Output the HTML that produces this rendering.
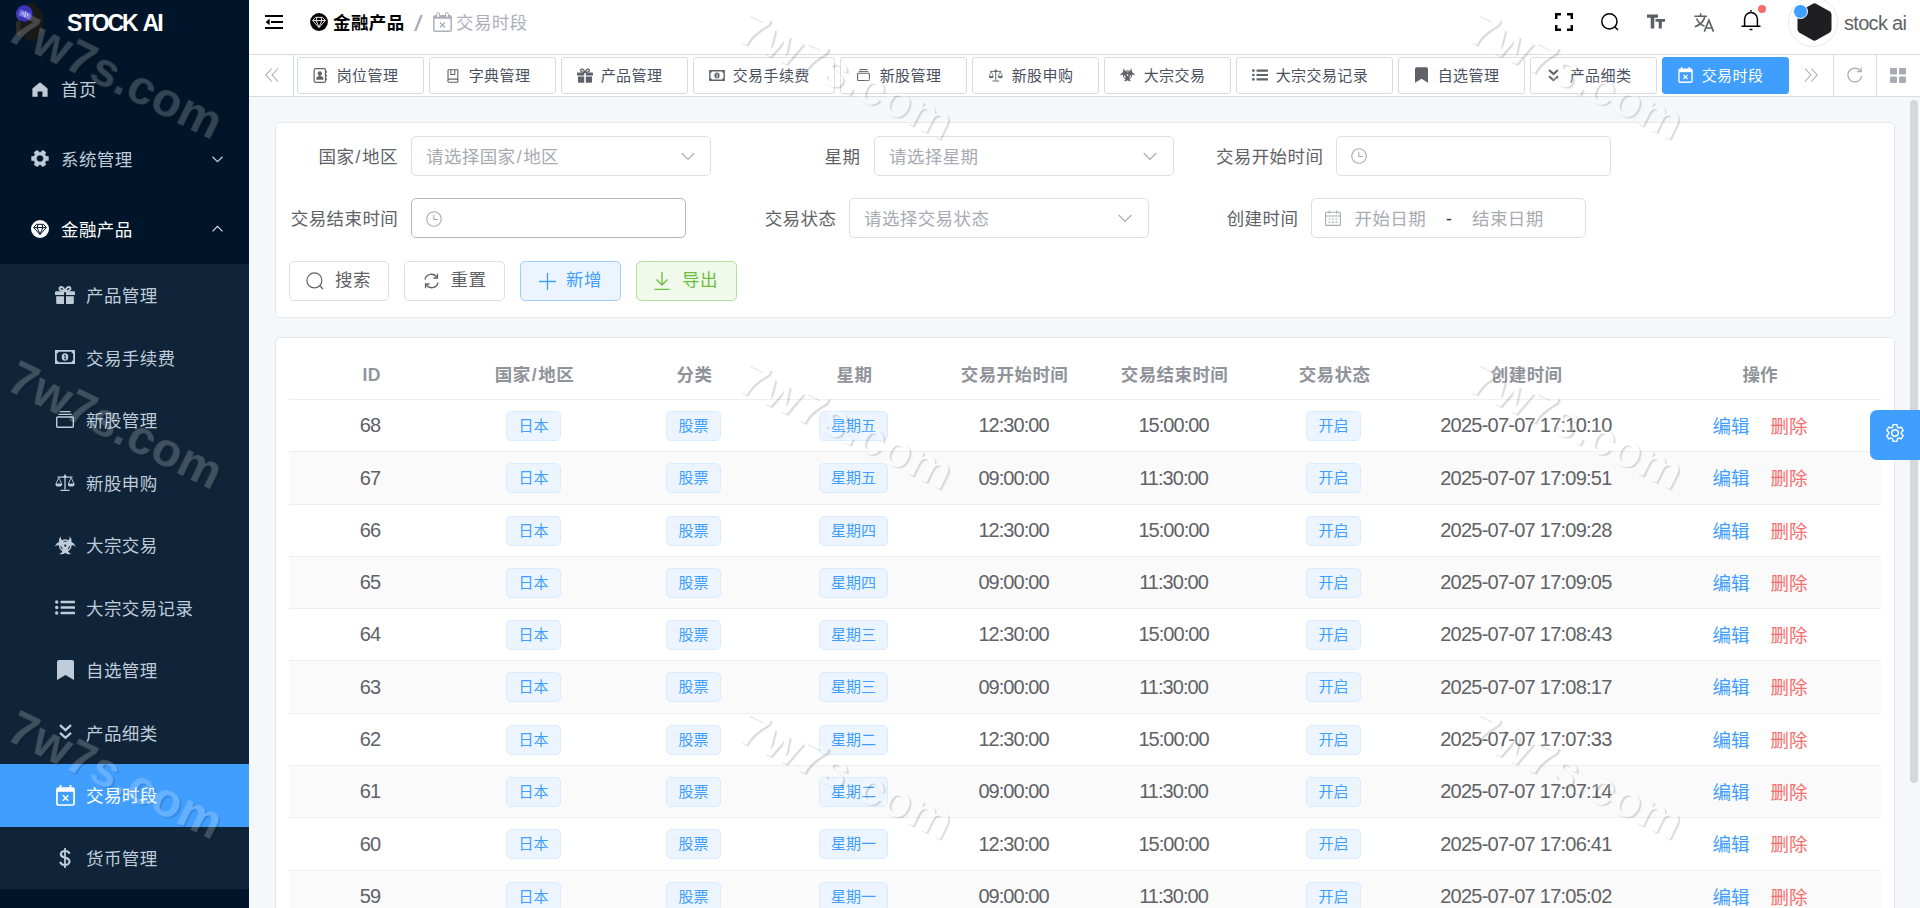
<!DOCTYPE html>
<html lang="zh-CN">
<head>
<meta charset="utf-8">
<title>STOCK AI - 交易时段</title>
<style>
*{box-sizing:border-box;margin:0;padding:0}
html,body{width:1920px;height:908px;overflow:hidden;background:#f5f7fa;
  font-family:"Liberation Sans","Noto Sans CJK SC",sans-serif;font-size:17.5px;color:#606266;letter-spacing:.4px}
svg{display:block}
.abs{position:absolute}
/* ---------- sidebar ---------- */
#side{position:absolute;left:0;top:0;width:249px;height:908px;background:#001529;overflow:hidden}
#logo-t{position:absolute;left:67px;top:10px;height:26px;line-height:26px;font-size:23px;font-weight:700;color:#fff;letter-spacing:-2.1px;word-spacing:2.6px;white-space:nowrap}
.mi{position:absolute;left:0;width:249px;color:#fff;white-space:nowrap}
.mi .tx{position:absolute;top:1px;font-size:17.5px}
.m1{height:70px;line-height:70px}
.m1 .tx{left:61px}
.m2{height:62.5px;line-height:62.5px}
.m2 .tx{left:86px}
#sub{position:absolute;left:0;top:264px;width:249px;height:625px;background:#0f2438}
.mi svg{position:absolute}
.act{background:#409eff}
/* ---------- header ---------- */
#nav{position:absolute;left:249px;top:0;width:1671px;height:54px;background:#fff}
#tags{position:absolute;left:249px;top:54px;width:1671px;height:43px;background:#fff;border-top:1px solid #d8dce5;border-bottom:1px solid #d8dce5}
.tag{position:absolute;top:2px;height:36.5px;border:1px solid #d9dbe0;border-radius:3px;background:#fff;color:#495060;font-size:15px;line-height:34px;white-space:nowrap}
.tag .tx{position:absolute;left:38.5px;top:1px}
.tag svg{position:absolute}
.tag.on{background:#409eff;border-color:#409eff;color:#fff}
.vsep{position:absolute;top:0;width:1px;height:41px;background:#d8dce5}
/* ---------- cards ---------- */
.card{position:absolute;background:#fff;border:1px solid #e4e7ed;border-radius:5px}
.lab{position:absolute;height:40px;line-height:42px;font-size:17.5px;color:#606266;text-align:right;white-space:nowrap}
.inp{position:absolute;height:40px;border:1px solid #dcdfe6;border-radius:5px;background:#fff;line-height:40px;font-size:17.5px;color:#a8abb2;white-space:nowrap}
.inp .ph{position:absolute;left:14px;top:0}
.btn{position:absolute;top:261px;height:40px;border:1px solid #dcdfe6;border-radius:5px;background:#fff;line-height:37px;font-size:17.5px;color:#606266;white-space:nowrap}
.btn .tx{position:absolute;top:0}
.btn svg{position:absolute}
/* ---------- table ---------- */
#tb{position:absolute;left:289px;top:350px;width:1592px}
.tr{position:absolute;left:0;width:1592px;height:52.31px;border-bottom:1px solid #ebeef5;line-height:51.3px;font-size:18.5px}
.tr.st{background:#fafafa}
.th{position:absolute;left:0;top:0;width:1592px;height:50px;border-bottom:1px solid #ebeef5;line-height:50px;font-weight:700;color:#909399}
.c{position:absolute;top:0;text-align:center;white-space:nowrap}
.c1{left:0;width:165.5px}.c2{left:165.5px;width:160px}.c3{left:325.5px;width:160px}.c4{left:485.5px;width:160px}
.c5{left:645.5px;width:160px}.c6{left:805.5px;width:160px}.c7{left:965.5px;width:160px}.c8{left:1125.5px;width:224.3px}.c9{left:1349.8px;width:241.2px;padding-left:1px;letter-spacing:0}
.c1.num{padding-right:3.5px}
.tg{margin-right:2px;letter-spacing:0;display:inline-block;height:30px;line-height:28px;padding:0 11px;font-size:15px;color:#409eff;background:#ecf5ff;border:1px solid #d9ecff;border-radius:5px;vertical-align:middle;position:relative;top:-1px}
.ed{color:#409eff;position:relative;top:1px}.de{color:#f56c6c;margin-left:21px;position:relative;top:1px}
.sl{padding:0 1.2px}
.num{font-size:20px;letter-spacing:-.75px}
.c5.num,.c6.num{letter-spacing:-.97px;padding-right:2px}
.c8.num{padding-right:1.5px}
/* ---------- watermark ---------- */
.wm{position:absolute;font-size:51px;font-style:italic;white-space:nowrap;transform-origin:0 0;transform:rotate(28deg);pointer-events:none;letter-spacing:1px}
.wmd{color:rgba(255,255,255,.2);font-weight:700}
.wml{color:rgba(255,255,255,.35);text-shadow:1.5px 1.5px 1px rgba(0,0,0,.28);font-weight:400}
</style>
</head>
<body>
<div id="side">
  <!-- logo -->
  <svg class="abs" style="left:14px;top:1px" width="34" height="44" viewBox="0 0 34 44">
    <path d="M8 6 L14.700 2.900 L18.300 1.300 Q19.300 1 20 1.800 L28.400 11.800 Q29 12.600 29 13.600 L29 29 Q29 30 28.400 30.800 L20.400 40.600 Q19.600 41.600 18.400 41 L3 33.600 Q2 33.100 2 32 L2 21 Z" fill="#191919"/>
    <path d="M2 21 L2 32 Q2 33.100 3 33.600 L6.500 35.300 L6.500 19Z" fill="#2b2b2b"/>
    <circle cx="10.300" cy="12.500" r="8.300" fill="#3a33c0"/>
    <path d="M2.300 10.500 A8.300 8.300 0 0 0 6 19.600 L6 7.500Z" fill="#4a44b8" opacity=".6"/>
    <path d="M6.500 8 L17.500 12.300 L15.500 18.600 L4.800 14.300Z" fill="#5b57d6"/>
    <path d="M9.500 10.800 L8.300 12.600 L9.800 14.200 M13 12 L14.300 13.800 L12.800 15.400 M11.800 10.300 L10.600 16.200" stroke="#e4e4ff" stroke-width=".8" fill="none"/>
  </svg>
  <div id="logo-t">STOCK AI</div>

  <div class="mi m1" style="top:54px;color:#bfcbd9">
    <svg style="left:32px;top:28px" width="16" height="15" viewBox="0 0 16 15"><path d="M8 .3 L15.6 6.6 V14.8 H10.4 V9.6 H5.6 V14.8 H.4 V6.6Z" fill="#bfcbd9"/></svg>
    <span class="tx">首页</span>
  </div>
  <div class="mi m1" style="top:124px;color:#bfcbd9">
    <svg style="left:30.900px;top:26.200px" width="18" height="17" viewBox="-9.500 -9 19 18"><path fill="#bfcbd9" fill-rule="evenodd" stroke="#bfcbd9" stroke-width=".6" stroke-linejoin="round" d="M6.25 2.40L8.87 2.05L8.87 -2.05L6.25 -2.40L5.21 -4.22L6.21 -6.66L2.66 -8.70L1.05 -6.62L-1.05 -6.62L-2.66 -8.70L-6.21 -6.66L-5.21 -4.22L-6.25 -2.40L-8.87 -2.05L-8.87 2.05L-6.25 2.40L-5.21 4.22L-6.21 6.66L-2.66 8.70L-1.05 6.62L1.05 6.62L2.66 8.70L6.21 6.66L5.21 4.22ZM3.700 0A3.700 3.700 0 1 0 -3.700 0A3.700 3.700 0 1 0 3.700 0Z"/></svg>
    <span class="tx">系统管理</span>
    <svg style="left:212px;top:32px" width="11" height="7" viewBox="0 0 11 7"><path d="M.5 .7 L5.5 5.7 L10.500 .7" stroke="#bfcbd9" stroke-width="1.300" fill="none"/></svg>
  </div>
  <div class="mi m1" style="top:194px">
    <svg style="left:31px;top:26px" width="18" height="18" viewBox="0 0 18 18"><circle cx="9" cy="9" r="9" fill="#fff"/><path d="M5.500 4.300h7l2.900 3.300L9 14.600 2.600 7.600zM3 7.600h12M7 4.400L6.100 7.600 9 14.200 11.900 7.600 11 4.400" stroke="#001529" stroke-width="1" fill="none" stroke-linejoin="round"/></svg>
    <span class="tx">金融产品</span>
    <svg style="left:212px;top:31px" width="11" height="7" viewBox="0 0 11 7"><path d="M.5 6.300 L5.500 1.300 L10.500 6.300" stroke="#e3e6ea" stroke-width="1.050" fill="none"/></svg>
  </div>
  <div id="sub"></div>
  <div class="mi m2" style="top:264px;color:#bfcbd9">
    <svg style="left:55px;top:22px" width="20" height="18" viewBox="0 0 20 18"><path fill="#bfcbd9" d="M1 5.200h8V9H0V6.200a1 1 0 011-1zM11 5.200h8a1 1 0 011 1V9h-9zM1.200 10.200H9V18H2.200a1 1 0 01-1-1zM11 10.200h7.800V17a1 1 0 01-1 1H11z"/><path d="M9.600 5 C7 5 4.500 4.300 4.500 2.500 C4.500 .8 7 .3 8.300 2 L10 5 L11.700 2 C13 .3 15.500 .8 15.500 2.500 C15.500 4.300 13 5 10.400 5" stroke="#bfcbd9" stroke-width="1.900" fill="none"/></svg>
    <span class="tx">产品管理</span>
  </div>
  <div class="mi m2" style="top:326.500px;color:#bfcbd9">
    <svg style="left:55px;top:23.500px" width="20" height="14" viewBox="0 0 20 14"><path fill="#bfcbd9" fill-rule="evenodd" d="M0 0h20v14H0zM3.500 1.800A1.800 1.800 0 011.800 3.500v7A1.800 1.800 0 013.500 12.200h13A1.800 1.800 0 0118.200 10.500v-7A1.800 1.800 0 0116.500 1.800z"/><ellipse cx="10" cy="7" rx="3.300" ry="3.800" fill="#bfcbd9"/><path d="M9.200 5.600l1-.6v3.600M9 8.800h2.200" stroke="#0f2438" stroke-width=".9" fill="none"/></svg>
    <span class="tx">交易手续费</span>
  </div>
  <div class="mi m2" style="top:389px;color:#bfcbd9">
    <svg style="left:56px;top:21.500px" width="18" height="17" viewBox="0 0 18 17"><path d="M3.500 .7h11M2.200 3.400h13.600" stroke="#bfcbd9" stroke-width="1.300" fill="none"/><rect x=".7" y="6" width="16.600" height="10.300" rx="1" stroke="#bfcbd9" stroke-width="1.400" fill="none"/></svg>
    <span class="tx">新股管理</span>
  </div>
  <div class="mi m2" style="top:451.500px;color:#bfcbd9">
    <svg style="left:55px;top:22px" width="20" height="17" viewBox="0 0 20 17"><path d="M10 .5V15.500M5.500 16.300h9M2.500 3.200h15" stroke="#bfcbd9" stroke-width="1.300" fill="none"/><path d="M3.800 3.600L.9 10h5.800zM16.200 3.600L13.300 10h5.800z" stroke="#bfcbd9" stroke-width=".9" fill="none" stroke-linejoin="round"/><path d="M.4 10h6.800a3.400 2.600 0 01-6.800 0zM12.800 10h6.800a3.400 2.600 0 01-6.800 0z" fill="#bfcbd9"/><circle cx="10" cy="2.600" r="1.500" fill="#bfcbd9"/></svg>
    <span class="tx">新股申购</span>
  </div>
  <div class="mi m2" style="top:514px;color:#bfcbd9">
    <svg style="left:55px;top:22px" width="20.500" height="18.500" viewBox="-10.700 -10 21.400 19.300"><defs><mask id="bm1" maskUnits="userSpaceOnUse" x="-12" y="-12" width="24" height="24"><g fill="#fff"><circle cx="0" cy="-4.900" r="6.600"/><circle cx="-4.240" cy="2.450" r="6.600"/><circle cx="4.240" cy="2.450" r="6.600"/></g><g fill="#000"><circle cx="0" cy="-8.500" r="4.600"/><circle cx="-7.360" cy="4.250" r="4.600"/><circle cx="7.360" cy="4.250" r="4.600"/></g><circle cx="0" cy="0" r="5.900" stroke="#fff" stroke-width="1.500" fill="none"/><circle cx="0" cy="0" r="1.200" fill="#000"/></mask></defs><rect x="-12" y="-12" width="24" height="24" fill="#bfcbd9" mask="url(#bm1)"/></svg>
    <span class="tx">大宗交易</span>
  </div>
  <div class="mi m2" style="top:576.500px;color:#bfcbd9">
    <svg style="left:55px;top:23.500px" width="20" height="15" viewBox="0 0 20 15"><g fill="#bfcbd9"><circle cx="1.700" cy="2" r="1.700"/><circle cx="1.700" cy="7.500" r="1.700"/><circle cx="1.700" cy="13" r="1.700"/><rect x="5.600" y=".7" width="14.400" height="2.600" rx=".5"/><rect x="5.600" y="6.200" width="14.400" height="2.600" rx=".5"/><rect x="5.600" y="11.700" width="14.400" height="2.600" rx=".5"/></g></svg>
    <span class="tx">大宗交易记录</span>
  </div>
  <div class="mi m2" style="top:639px;color:#bfcbd9">
    <svg style="left:56.500px;top:21px" width="17" height="20" viewBox="0 0 17 20"><path fill="#bfcbd9" d="M0 20V2a2 2 0 012-2h13a2 2 0 012 2v18l-8.500-5z"/></svg>
    <span class="tx">自选管理</span>
  </div>
  <div class="mi m2" style="top:701.500px;color:#bfcbd9">
    <svg style="left:59px;top:22.500px" width="13" height="16" viewBox="0 0 13 16"><path d="M1 1.200L6.500 6.200 12 1.200M1 8.800L6.500 13.800 12 8.800" stroke="#bfcbd9" stroke-width="2.300" fill="none"/></svg>
    <span class="tx">产品细类</span>
  </div>
  <div class="mi m2 act" style="top:764px">
    <svg style="left:55.500px;top:20.500px" width="19" height="21" viewBox="0 0 19 21"><path d="M4.500 0v4.500M14.500 0v4.500" stroke="#fff" stroke-width="1.800"/><rect x=".9" y="3" width="17.200" height="17" rx="1.500" stroke="#fff" stroke-width="1.700" fill="none"/><path d="M1 3.200h17v3.600H1z" fill="#fff"/><path d="M6.800 10.300l5.400 5.400M12.200 10.300l-5.400 5.400" stroke="#fff" stroke-width="1.500"/></svg>
    <span class="tx">交易时段</span>
  </div>
  <div class="mi m2" style="top:826.500px;color:#bfcbd9">
    <svg style="left:59px;top:21px" width="12" height="20" viewBox="0 0 12 20"><path d="M6 0v20" stroke="#bfcbd9" stroke-width="1.800"/><path d="M10.500 5.800C10 3.600 8.200 3 6 3 3.500 3 1.800 4.200 1.800 6.200c0 4.500 8.700 2.400 8.700 7C10.500 15.500 8.500 17 6 17c-2.600 0-4.300-1-4.700-3.200" stroke="#bfcbd9" stroke-width="2.200" fill="none"/></svg>
    <span class="tx">货币管理</span>
  </div>

</div>

<div id="nav">
  <!-- hamburger : coordinates relative to nav (x-249) -->
  <svg class="abs" style="left:16px;top:15px" width="18" height="14" viewBox="0 0 18 14"><path d="M0 1h18M6 7h12M0 13h18" stroke="#000" stroke-width="2"/><path d="M4.600 3.800v6.400L.6 7z" fill="#000"/></svg>
  <svg class="abs" style="left:61px;top:13px" width="18" height="18" viewBox="0 0 18 18"><circle cx="9" cy="9" r="8.900" fill="#000"/><path d="M5.500 4.300h7l2.900 3.300L9 14.600 2.600 7.600zM3 7.600h12M7 4.400L6.100 7.600 9 14.200 11.900 7.600 11 4.400" stroke="#fff" stroke-width=".9" fill="none" stroke-linejoin="round"/></svg>
  <div class="abs" style="left:84px;top:8px;height:30px;line-height:30px;font-weight:700;color:#000;font-size:17.500px;white-space:nowrap">金融产品</div>
  <div class="abs" style="left:164.500px;top:9px;width:9px;height:30px;line-height:30px;color:#a9aebc;font-size:22px;transform:scaleX(1.450);transform-origin:0 50%">/</div>
  <svg class="abs" style="left:184px;top:12px" width="19" height="20" viewBox="0 0 19 20"><rect x=".8" y="3.800" width="17.400" height="15.400" rx="1.500" stroke="#adb0b8" stroke-width="1.500" fill="none"/><path d="M.8 4h17.400v2.800H.8z" fill="#adb0b8"/><rect x="3.700" y=".5" width="2.800" height="5" rx="1.400" fill="#fff" stroke="#adb0b8" stroke-width="1"/><rect x="12.500" y=".5" width="2.800" height="5" rx="1.400" fill="#fff" stroke="#adb0b8" stroke-width="1"/><path d="M7 10.500l5 5M12 10.500l-5 5" stroke="#adb0b8" stroke-width="1.400"/></svg>
  <div class="abs" style="left:207px;top:8px;height:30px;line-height:30px;color:#adb0b8;font-size:17.500px;white-space:nowrap">交易时段</div>

  <!-- right icons -->
  <svg class="abs" style="left:1306px;top:13px" width="18" height="18" viewBox="0 0 18 18"><path d="M1.200 6V1.200H6M12 1.200h4.800V6M16.800 12v4.800H12M6 16.800H1.200V12" stroke="#000" stroke-width="2.400" fill="none"/></svg>
  <svg class="abs" style="left:1352px;top:13px" width="18" height="18" viewBox="0 0 18 18"><circle cx="8.400" cy="8.400" r="7.600" stroke="#000" stroke-width="1.500" fill="none"/><path d="M13.800 13.800L17 17" stroke="#000" stroke-width="1.500"/></svg>
  <svg class="abs" style="left:1398px;top:14px" width="18" height="15" viewBox="0 0 18 15"><path d="M0 .5h11v3.200H7.300V14.500H3.700V3.700H0zM8.500 5h9.500v2.700h-3.200V14.500h-3.100V7.700H8.500z" fill="#5a5e66"/></svg>
  <svg class="abs" style="left:1445px;top:13px" width="20" height="19" viewBox="0 0 20 19"><path d="M.3 3.300h12.600M6.600 .3v3M10.800 3.500C10 8 6.200 12 .8 13.800M2.600 5.600c1.100 3.200 4.400 6.400 8 7.700" stroke="#606266" stroke-width="1.600" fill="none"/><path d="M10.300 18.600L14.900 7.200 19.500 18.600M11.800 15h6.200" stroke="#606266" stroke-width="1.700" fill="none"/></svg>
  <svg class="abs" style="left:1492px;top:9px" width="20" height="22" viewBox="0 0 20 22"><path d="M10 1v1.600M3.600 17V10a6.400 6.400 0 0112.800 0v7M.5 17.300h19M8.600 20.500h2.800" stroke="#000" stroke-width="1.500" fill="none"/></svg>
  <div class="abs" style="left:1509px;top:5px;width:8.400px;height:8.400px;border-radius:50%;background:#f56c6c"></div>
  <!-- avatar -->
  <div class="abs" style="left:1539px;top:-3px;width:50px;height:50px;border-radius:50%;border:1px solid #e9e9eb;background:#fff"></div>
  <svg class="abs" style="left:1547px;top:3px" width="37" height="38" viewBox="0 0 37 38"><path d="M16.500 .9q2-1.100 4 0l13 7.300q2 1.200 2 3.500v14.600q0 2.300-2 3.500l-13 7.300q-2 1.100-4 0l-13-7.300q-2-1.200-2-3.500V11.700q0-2.300 2-3.500z" fill="#1f1f21"/></svg>
  <div class="abs" style="left:1544px;top:3.500px;width:15px;height:15px;border-radius:50%;background:#409eff;border:1.200px solid #fff"></div>
  <div class="abs" style="left:1595px;top:9px;height:28px;line-height:28px;font-size:20px;color:#606266;letter-spacing:-.7px;white-space:nowrap">stock ai</div>
</div>

<div id="tags">
  <svg class="abs" style="left:16px;top:13.300px" width="14" height="14" viewBox="0 0 14 14"><path d="M6.700 .5L.8 7l5.900 6.500M13 .5L7.100 7 13 13.500" stroke="#a8abb2" stroke-width="1.100" fill="none"/></svg>
  <div class="vsep" style="left:44px"></div>
  <div class="tag" style="left:48.2px;width:126.5px"><svg style="left:15.0px;top:10.3px" width="15" height="15" viewBox="0 0 15 16"><rect x=".7" y=".7" width="12.100" height="14.600" rx="1.500" stroke="#5f6369" stroke-width="1.300" fill="none"/><path d="M13.600 3v2M13.600 7v2M13.600 11v2" stroke="#5f6369" stroke-width="1.400"/><ellipse cx="6.800" cy="5.900" rx="2.300" ry="2.500" fill="#5f6369"/><path d="M2.900 12.600c0-2.900 1.500-4 3.900-4s3.900 1.100 3.900 4z" fill="#5f6369"/></svg><span class="tx">岗位管理</span></div>
  <div class="tag" style="left:180.2px;width:126.5px"><svg style="left:16.8px;top:10.5px" width="12" height="14" viewBox="0 0 14 16"><path d="M1.200 .7h11.400v14.600H2.700a1.500 1.500 0 010-3.600h9.900M1.200 13.500V.7" stroke="#5f6369" stroke-width="1.300" fill="none"/><path d="M4.500 .7v5.600h4.600V.7" stroke="#5f6369" stroke-width="1.200" fill="none"/></svg><span class="tx">字典管理</span></div>
  <div class="tag" style="left:312.2px;width:126.5px"><svg style="left:14.5px;top:9.8px" width="16" height="15" viewBox="0 0 20 18"><path fill="#5f6369" d="M1 5.200h8V9H0V6.200a1 1 0 011-1zM11 5.200h8a1 1 0 011 1V9h-9zM1.200 10.200H9V18H2.200a1 1 0 01-1-1zM11 10.200h7.800V17a1 1 0 01-1 1H11z"/><path d="M9.600 5C7 5 4.500 4.300 4.500 2.500 4.500.8 7 .3 8.300 2L10 5l1.700-3C13 .3 15.500.8 15.500 2.500 15.500 4.300 13 5 10.400 5" stroke="#5f6369" stroke-width="1.600" fill="none"/></svg><span class="tx">产品管理</span></div>
  <div class="tag" style="left:444.2px;width:141.5px"><svg style="left:14.5px;top:11.8px" width="16" height="11" viewBox="0 0 20 14"><path fill="#5f6369" fill-rule="evenodd" d="M0 0h20v14H0zM3.500 1.800A1.800 1.800 0 011.800 3.500v7a1.800 1.800 0 011.700 1.700h13a1.800 1.800 0 011.700-1.700v-7a1.800 1.800 0 01-1.700-1.700z"/><ellipse cx="10" cy="7" rx="3.300" ry="3.800" fill="#5f6369"/><path d="M9.200 5.600l1-.6v3.600M9 8.800h2.200" stroke="#fff" stroke-width=".9" fill="none"/></svg><span class="tx">交易手续费</span></div>
  <div class="tag" style="left:591.2px;width:126.5px"><svg style="left:16.0px;top:11.3px" width="13" height="12" viewBox="0 0 18 17"><path d="M3.500 .7h11M2.200 3.400h13.600" stroke="#5f6369" stroke-width="1.400" fill="none"/><rect x=".7" y="6" width="16.600" height="10.300" rx="1" stroke="#5f6369" stroke-width="1.500" fill="none"/></svg><span class="tx">新股管理</span></div>
  <div class="tag" style="left:723.2px;width:126.5px"><svg style="left:14.8px;top:11.1px" width="15.5" height="12.5" viewBox="0 0 20 17"><path d="M10 .5v15M5.500 16.300h9M2.500 3.200h15" stroke="#5f6369" stroke-width="1.300" fill="none"/><path d="M3.800 3.600L.9 10h5.800zM16.200 3.600L13.300 10h5.800z" stroke="#5f6369" stroke-width=".9" fill="none" stroke-linejoin="round"/><path d="M.4 10h6.800a3.400 2.600 0 01-6.800 0zM12.800 10h6.800a3.400 2.600 0 01-6.800 0z" fill="#5f6369"/><circle cx="10" cy="2.600" r="1.500" fill="#5f6369"/></svg><span class="tx">新股申购</span></div>
  <div class="tag" style="left:855.2px;width:126.5px"><svg style="left:15.0px;top:10.3px" width="15" height="13.500" viewBox="-10.700 -10 21.400 19.300"><defs><mask id="bm2" maskUnits="userSpaceOnUse" x="-12" y="-12" width="24" height="24"><g fill="#fff"><circle cx="0" cy="-4.900" r="6.600"/><circle cx="-4.240" cy="2.450" r="6.600"/><circle cx="4.240" cy="2.450" r="6.600"/></g><g fill="#000"><circle cx="0" cy="-8.500" r="4.600"/><circle cx="-7.360" cy="4.250" r="4.600"/><circle cx="7.360" cy="4.250" r="4.600"/></g><circle cx="0" cy="0" r="5.900" stroke="#fff" stroke-width="1.500" fill="none"/><circle cx="0" cy="0" r="1.200" fill="#000"/></mask></defs><rect x="-12" y="-12" width="24" height="24" fill="#5f6369" mask="url(#bm2)"/></svg><span class="tx">大宗交易</span></div>
  <div class="tag" style="left:987.2px;width:156.5px"><svg style="left:14.5px;top:11.3px" width="16" height="12" viewBox="0 0 20 15"><g fill="#5f6369"><circle cx="1.700" cy="2" r="1.700"/><circle cx="1.700" cy="7.500" r="1.700"/><circle cx="1.700" cy="13" r="1.700"/><rect x="5.600" y=".7" width="14.400" height="2.600" rx=".5"/><rect x="5.600" y="6.200" width="14.400" height="2.600" rx=".5"/><rect x="5.600" y="11.700" width="14.400" height="2.600" rx=".5"/></g></svg><span class="tx">大宗交易记录</span></div>
  <div class="tag" style="left:1149.2px;width:126.5px"><svg style="left:16.0px;top:9.3px" width="13" height="16" viewBox="0 0 17 20"><path fill="#5f6369" d="M0 20V2a2 2 0 012-2h13a2 2 0 012 2v18l-8.500-5z"/></svg><span class="tx">自选管理</span></div>
  <div class="tag" style="left:1281.2px;width:126.5px"><svg style="left:17.0px;top:10.8px" width="11" height="13" viewBox="0 0 13 16"><path d="M1 1.200l5.500 5 5.500-5M1 8.800l5.500 5 5.500-5" stroke="#5f6369" stroke-width="2.500" fill="none"/></svg><span class="tx">产品细类</span></div>
  <div class="tag on" style="left:1413.2px;width:127.0px"><svg style="left:15.0px;top:9.3px" width="15" height="16" viewBox="0 0 19 21"><path d="M4.500 0v4.500M14.500 0v4.500" stroke="#fff" stroke-width="1.900"/><rect x=".9" y="3" width="17.200" height="17" rx="1.500" stroke="#fff" stroke-width="1.800" fill="none"/><path d="M1 3.200h17v3.600H1z" fill="#fff"/><path d="M6.800 10.300l5.400 5.400M12.200 10.300l-5.400 5.400" stroke="#fff" stroke-width="1.600"/></svg><span class="tx">交易时段</span></div>
  <svg class="abs" style="left:1555px;top:13.300px" width="14" height="14" viewBox="0 0 14 14"><path d="M1 .5L6.900 7 1 13.500M7.300 .5L13.200 7 7.300 13.500" stroke="#a8abb2" stroke-width="1.100" fill="none"/></svg>
  <div class="vsep" style="left:1584px"></div>
  <svg class="abs" style="left:1597.500px;top:12px" width="16" height="16" viewBox="0 0 16 16"><path d="M14.600 9A6.900 6.900 0 117.700 1.100 6.900 6.900 0 0113.400 4M14.200 .6V4.600H10.200" stroke="#a8abb2" stroke-width="1.200" fill="none"/></svg>
  <div class="vsep" style="left:1627px"></div>
  <svg class="abs" style="left:1641px;top:12.500px" width="16" height="15" viewBox="0 0 16 15"><g fill="#a8abb2"><rect x="0" y="0" width="7" height="6.600" rx="1"/><rect x="9" y="0" width="7" height="6.600" rx="1"/><rect x="0" y="8.400" width="7" height="6.600" rx="1"/><rect x="9" y="8.400" width="7" height="6.600" rx="1"/></g></svg>
</div>
<div class="card" style="left:275px;top:122px;width:1620px;height:196px"></div>
<div class="lab" style="left:290.8px;width:107px;top:136px">国家<span class="sl">/</span>地区</div>
<div class="inp" style="left:411px;top:136px;width:300px"><span class="ph">请选择国家<span class="sl">/</span>地区</span>
  <svg class="abs" style="left:269px;top:15px" width="14" height="9" viewBox="0 0 14 9"><path d="M.7 1L7 7.300 13.300 1" stroke="#a8abb2" stroke-width="1.200" fill="none"/></svg></div>
<div class="lab" style="left:752.8px;width:107.500px;top:136px">星期</div>
<div class="inp" style="left:874px;top:136px;width:300px"><span class="ph">请选择星期</span>
  <svg class="abs" style="left:268px;top:15px" width="14" height="9" viewBox="0 0 14 9"><path d="M.7 1L7 7.300 13.300 1" stroke="#a8abb2" stroke-width="1.200" fill="none"/></svg></div>
<div class="lab" style="left:1215.8px;width:107.500px;top:136px">交易开始时间</div>
<div class="inp" style="left:1336px;top:136px;width:275px">
  <svg class="abs" style="left:14px;top:11px" width="16" height="16" viewBox="0 0 16 16"><circle cx="8" cy="8" r="7.300" stroke="#a8abb2" stroke-width="1.100" fill="none"/><path d="M7.800 3.800V8.500H12" stroke="#a8abb2" stroke-width="1.100" fill="none"/></svg></div>

<div class="lab" style="left:290.8px;width:107px;top:198px">交易结束时间</div>
<div class="inp" style="left:411px;top:198px;width:275px;border-color:#b4b7bd">
  <svg class="abs" style="left:14px;top:11.500px" width="16" height="16" viewBox="0 0 16 16"><circle cx="8" cy="8" r="7.300" stroke="#a8abb2" stroke-width="1.100" fill="none"/><path d="M7.800 3.800V8.500H12" stroke="#a8abb2" stroke-width="1.100" fill="none"/></svg></div>
<div class="lab" style="left:728.8px;width:107.500px;top:198px">交易状态</div>
<div class="inp" style="left:849px;top:198px;width:300px"><span class="ph">请选择交易状态</span>
  <svg class="abs" style="left:268px;top:15px" width="14" height="9" viewBox="0 0 14 9"><path d="M.7 1L7 7.300 13.300 1" stroke="#a8abb2" stroke-width="1.200" fill="none"/></svg></div>
<div class="lab" style="left:1190.8px;width:107.500px;top:198px">创建时间</div>
<div class="inp" style="left:1311px;top:198px;width:275px">
  <svg class="abs" style="left:13px;top:11px" width="16" height="16" viewBox="0 0 16 16"><rect x=".6" y="2.200" width="14.800" height="13.200" rx="1" stroke="#a8abb2" stroke-width="1.100" fill="none"/><path d="M.6 6h14.800M4.300 .5v3M11.700 .5v3" stroke="#a8abb2" stroke-width="1.100"/><path d="M3.500 9h2M7 9h2M10.500 9h2M3.500 12.200h2M7 12.200h2M10.500 12.200h2" stroke="#a8abb2" stroke-width="1.200"/></svg>
  <span class="ph" style="left:42.500px">开始日期</span><span class="ph" style="left:134px;color:#303133">-</span><span class="ph" style="left:160px">结束日期</span></div>

<div class="btn" style="left:289px;width:100px">
  <svg style="left:16px;top:10px" width="18" height="18" viewBox="0 0 18 18"><circle cx="8.400" cy="8.400" r="7.500" stroke="#606266" stroke-width="1.200" fill="none"/><path d="M13.800 13.800L17 17" stroke="#606266" stroke-width="1.300"/></svg>
  <span class="tx" style="left:45px">搜索</span></div>
<div class="btn" style="left:404px;width:100.500px">
  <svg style="left:18px;top:11px" width="17" height="16" viewBox="0 0 17 16"><path d="M2 6.500A6.500 6.500 0 0114 4.500M15 9.500A6.500 6.500 0 013 11.500" stroke="#606266" stroke-width="1.300" fill="none"/><path d="M14.500 .8V5H10.500M2.500 15.200V11H6.500" stroke="#606266" stroke-width="1.300" fill="none"/></svg>
  <span class="tx" style="left:45.500px">重置</span></div>
<div class="btn" style="left:520px;width:101px;background:#ecf5ff;border-color:#a0cfff;color:#409eff">
  <svg style="left:18px;top:11px" width="17" height="17" viewBox="0 0 17 17"><path d="M8.500 0v17M0 8.500h17" stroke="#409eff" stroke-width="1.300"/></svg>
  <span class="tx" style="left:45px">新增</span></div>
<div class="btn" style="left:636px;width:101px;background:#f0f9eb;border-color:#b3e19d;color:#67c23a">
  <svg style="left:17px;top:10px" width="16" height="18" viewBox="0 0 16 18"><path d="M8 0v12.500M2.500 7.500L8 13l5.500-5.500M.5 17.300h15" stroke="#67c23a" stroke-width="1.300" fill="none"/></svg>
  <span class="tx" style="left:45px">导出</span></div>

<div class="card" style="left:275px;top:337px;width:1620px;height:600px"></div>
<div id="tb">
  <div class="th"><div class="c c1">ID</div><div class="c c2">国家<span class="sl">/</span>地区</div><div class="c c3">分类</div><div class="c c4">星期</div><div class="c c5">交易开始时间</div><div class="c c6">交易结束时间</div><div class="c c7">交易状态</div><div class="c c8">创建时间</div><div class="c c9">操作</div></div>
  <div class="tr" style="top:50px;height:52px;line-height:51px"><div class="c c1 num">68</div><div class="c c2"><span class="tg">日本</span></div><div class="c c3"><span class="tg">股票</span></div><div class="c c4"><span class="tg">星期五</span></div><div class="c c5 num">12:30:00</div><div class="c c6 num">15:00:00</div><div class="c c7"><span class="tg">开启</span></div><div class="c c8 num">2025-07-07 17:10:10</div><div class="c c9"><span class="ed">编辑</span><span class="de">删除</span></div></div>
  <div class="tr st" style="top:102px;height:53px;line-height:52px"><div class="c c1 num">67</div><div class="c c2"><span class="tg">日本</span></div><div class="c c3"><span class="tg">股票</span></div><div class="c c4"><span class="tg">星期五</span></div><div class="c c5 num">09:00:00</div><div class="c c6 num">11:30:00</div><div class="c c7"><span class="tg">开启</span></div><div class="c c8 num">2025-07-07 17:09:51</div><div class="c c9"><span class="ed">编辑</span><span class="de">删除</span></div></div>
  <div class="tr" style="top:155px;height:52px;line-height:51px"><div class="c c1 num">66</div><div class="c c2"><span class="tg">日本</span></div><div class="c c3"><span class="tg">股票</span></div><div class="c c4"><span class="tg">星期四</span></div><div class="c c5 num">12:30:00</div><div class="c c6 num">15:00:00</div><div class="c c7"><span class="tg">开启</span></div><div class="c c8 num">2025-07-07 17:09:28</div><div class="c c9"><span class="ed">编辑</span><span class="de">删除</span></div></div>
  <div class="tr st" style="top:207px;height:52px;line-height:51px"><div class="c c1 num">65</div><div class="c c2"><span class="tg">日本</span></div><div class="c c3"><span class="tg">股票</span></div><div class="c c4"><span class="tg">星期四</span></div><div class="c c5 num">09:00:00</div><div class="c c6 num">11:30:00</div><div class="c c7"><span class="tg">开启</span></div><div class="c c8 num">2025-07-07 17:09:05</div><div class="c c9"><span class="ed">编辑</span><span class="de">删除</span></div></div>
  <div class="tr" style="top:259px;height:52px;line-height:51px"><div class="c c1 num">64</div><div class="c c2"><span class="tg">日本</span></div><div class="c c3"><span class="tg">股票</span></div><div class="c c4"><span class="tg">星期三</span></div><div class="c c5 num">12:30:00</div><div class="c c6 num">15:00:00</div><div class="c c7"><span class="tg">开启</span></div><div class="c c8 num">2025-07-07 17:08:43</div><div class="c c9"><span class="ed">编辑</span><span class="de">删除</span></div></div>
  <div class="tr st" style="top:311px;height:53px;line-height:52px"><div class="c c1 num">63</div><div class="c c2"><span class="tg">日本</span></div><div class="c c3"><span class="tg">股票</span></div><div class="c c4"><span class="tg">星期三</span></div><div class="c c5 num">09:00:00</div><div class="c c6 num">11:30:00</div><div class="c c7"><span class="tg">开启</span></div><div class="c c8 num">2025-07-07 17:08:17</div><div class="c c9"><span class="ed">编辑</span><span class="de">删除</span></div></div>
  <div class="tr" style="top:364px;height:52px;line-height:51px"><div class="c c1 num">62</div><div class="c c2"><span class="tg">日本</span></div><div class="c c3"><span class="tg">股票</span></div><div class="c c4"><span class="tg">星期二</span></div><div class="c c5 num">12:30:00</div><div class="c c6 num">15:00:00</div><div class="c c7"><span class="tg">开启</span></div><div class="c c8 num">2025-07-07 17:07:33</div><div class="c c9"><span class="ed">编辑</span><span class="de">删除</span></div></div>
  <div class="tr st" style="top:416px;height:52px;line-height:51px"><div class="c c1 num">61</div><div class="c c2"><span class="tg">日本</span></div><div class="c c3"><span class="tg">股票</span></div><div class="c c4"><span class="tg">星期二</span></div><div class="c c5 num">09:00:00</div><div class="c c6 num">11:30:00</div><div class="c c7"><span class="tg">开启</span></div><div class="c c8 num">2025-07-07 17:07:14</div><div class="c c9"><span class="ed">编辑</span><span class="de">删除</span></div></div>
  <div class="tr" style="top:468px;height:53px;line-height:52px"><div class="c c1 num">60</div><div class="c c2"><span class="tg">日本</span></div><div class="c c3"><span class="tg">股票</span></div><div class="c c4"><span class="tg">星期一</span></div><div class="c c5 num">12:30:00</div><div class="c c6 num">15:00:00</div><div class="c c7"><span class="tg">开启</span></div><div class="c c8 num">2025-07-07 17:06:41</div><div class="c c9"><span class="ed">编辑</span><span class="de">删除</span></div></div>
  <div class="tr st" style="top:521px;height:52px;line-height:51px"><div class="c c1 num">59</div><div class="c c2"><span class="tg">日本</span></div><div class="c c3"><span class="tg">股票</span></div><div class="c c4"><span class="tg">星期一</span></div><div class="c c5 num">09:00:00</div><div class="c c6 num">11:30:00</div><div class="c c7"><span class="tg">开启</span></div><div class="c c8 num">2025-07-07 17:05:02</div><div class="c c9"><span class="ed">编辑</span><span class="de">删除</span></div></div>
</div>
<div class="abs" style="left:1910px;top:100px;width:8px;height:683px;border-radius:4px;background:#d6d7db"></div>
<div class="abs" style="left:1870px;top:410px;width:50px;height:50px;background:#409eff;border-radius:7px 0 0 7px">
  <svg class="abs" style="left:15px;top:13px" width="20" height="20" viewBox="-10 -10 20 20"><path d="M2.46 -5.80L1.93 -8.38L-1.93 -8.38L-2.46 -5.80L-3.79 -5.03L-6.29 -5.87L-8.22 -2.51L-6.25 -0.77L-6.25 0.77L-8.22 2.51L-6.29 5.87L-3.79 5.03L-2.46 5.80L-1.93 8.38L1.93 8.38L2.46 5.80L3.79 5.03L6.29 5.87L8.22 2.51L6.25 0.77L6.25 -0.77L8.22 -2.51L6.29 -5.87L3.79 -5.03Z" stroke="#fff" stroke-width="1.400" fill="none" stroke-linejoin="round"/><circle cx="0" cy="0" r="3.300" stroke="#fff" stroke-width="1.400" fill="none"/></svg>
</div>
<svg class="abs" style="left:0;top:0;pointer-events:none" width="1920" height="908" viewBox="0 0 1920 908" font-family="Liberation Sans, sans-serif" font-weight="700" font-size="48" letter-spacing=".3">
<defs><mask id="wmk" maskUnits="userSpaceOnUse" x="0" y="0" width="1920" height="908"><rect x="0" y="0" width="1920" height="908" fill="#fff"/>
<text transform="translate(4.5 38.9) rotate(26)" fill="#000">7w7s.com</text>
<text transform="translate(4.5 388.9) rotate(26)" fill="#000">7w7s.com</text>
<text transform="translate(4.5 738.9) rotate(26)" fill="#000">7w7s.com</text>
<text transform="translate(734.5 38.9) rotate(26)" fill="#000">7w7s.com</text>
<text transform="translate(734.5 388.9) rotate(26)" fill="#000">7w7s.com</text>
<text transform="translate(734.5 738.9) rotate(26)" fill="#000">7w7s.com</text>
<text transform="translate(1464.5 38.9) rotate(26)" fill="#000">7w7s.com</text>
<text transform="translate(1464.5 388.9) rotate(26)" fill="#000">7w7s.com</text>
<text transform="translate(1464.5 738.9) rotate(26)" fill="#000">7w7s.com</text>
</mask></defs>
<g mask="url(#wmk)" fill="rgba(0,0,0,.15)">
<text transform="translate(6.1 40.5) rotate(26)">7w7s.com</text>
<text transform="translate(6.1 390.5) rotate(26)">7w7s.com</text>
<text transform="translate(6.1 740.5) rotate(26)">7w7s.com</text>
<text transform="translate(736.1 40.5) rotate(26)">7w7s.com</text>
<text transform="translate(736.1 390.5) rotate(26)">7w7s.com</text>
<text transform="translate(736.1 740.5) rotate(26)">7w7s.com</text>
<text transform="translate(1466.1 40.5) rotate(26)">7w7s.com</text>
<text transform="translate(1466.1 390.5) rotate(26)">7w7s.com</text>
<text transform="translate(1466.1 740.5) rotate(26)">7w7s.com</text>
</g><g fill="rgba(255,255,255,.2)">
<text transform="translate(4.5 38.9) rotate(26)">7w7s.com</text>
<text transform="translate(4.5 388.9) rotate(26)">7w7s.com</text>
<text transform="translate(4.5 738.9) rotate(26)">7w7s.com</text>
<text transform="translate(734.5 38.9) rotate(26)">7w7s.com</text>
<text transform="translate(734.5 388.9) rotate(26)">7w7s.com</text>
<text transform="translate(734.5 738.9) rotate(26)">7w7s.com</text>
<text transform="translate(1464.5 38.9) rotate(26)">7w7s.com</text>
<text transform="translate(1464.5 388.9) rotate(26)">7w7s.com</text>
<text transform="translate(1464.5 738.9) rotate(26)">7w7s.com</text>
</g></svg>
</body>
</html>
